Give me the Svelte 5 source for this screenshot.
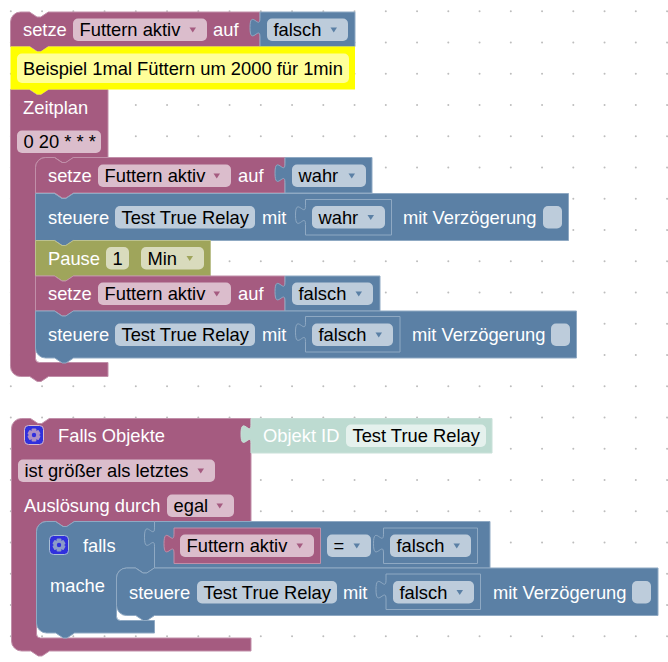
<script>
  const PURPLE = { fill: '#a55b80', line: '#c18fa9', field: '#dbbdcc', arrow: '#a55b80' };
  const BLUE = { fill: '#5b80a5', line: '#8fa9c3', field: '#bdccdb', arrow: '#5b80a5' };
  const OLIVE = { fill: '#9fa55b', line: '#bcc18f', field: '#d9dbbd', arrow: '#9fa55b' };
  const MINT = { fill: '#bddbd1', line: '#c8e0d8', field: '#e5f1ed', arrow: '#bddbd1' };

  const R = 10;
  const notchDown = 'l 7.5,5 3.75,0 7.5,-5';
  const notchUp = 'l -7.5,5 -3.75,0 -7.5,-5';
  const corner = `a ${R},${R} 0 0 1 ${R},-${R}`;
  const cornerBack = `a ${R},${R} 0 0 1 -${R},-${R}`;

  // statement block: dent on top, notch below
  function stack({ x, y, w, h, roundTop, roundBottom }) {
    const top = roundTop ? `M ${x},${y + R} ${corner}` : `M ${x},${y}`;
    const end = roundBottom ? `H ${x + R} ${cornerBack}` : `H ${x}`;
    return `${top} H ${x + 19} ${notchDown} H ${x + w} V ${y + h} H ${x + 38} ${notchUp} ${end} z`;
  }

  // block with a statement input (the C shape)
  function mouth({ x, y, w, head, inner, barTop, bottom, roundTop, barW }) {
    const top = roundTop ? `M ${x},${y + R} ${corner}` : `M ${x},${y}`;
    return `${top} H ${x + 19} ${notchDown} H ${x + w} V ${head} H ${inner + 38} ${notchUp} H ${inner + R}
      a ${R},${R} 0 0 0 -${R},${R} V ${barTop - 4} a 4,4 0 0 0 4,4 H ${x + barW} V ${bottom}
      H ${x + 38} ${notchUp} H ${x + R} ${cornerBack} z`;
  }

  // value block: puzzle tab on the left
  function value({ x, y, w, h }) {
    return `M ${x},${y} H ${x + w} V ${y + h} H ${x} V ${y + 25}
      c 0,-12.5 -10,10 -10,-9.375 s 10,3.125 10,-9.375 z`;
  }

  const shapes = [
    // first stack
    { d: stack({ x: 10.5, y: 12, w: 249.5, h: 34.5, roundTop: true }), c: PURPLE },
    { d: value({ x: 260, y: 12, w: 95, h: 34.5 }), c: BLUE },
    { d: mouth({ x: 10.5, y: 89.5, w: 97.5, head: 157.5, inner: 35.5, barTop: 362.5, bottom: 376.5, barW: 97.5 }), c: PURPLE },
    { d: stack({ x: 35.5, y: 157.5, w: 249.5, h: 35.5, roundTop: true }), c: PURPLE },
    { d: value({ x: 285, y: 157.5, w: 87, h: 35.5 }), c: BLUE },
    { d: stack({ x: 35.5, y: 193.5, w: 533, h: 47 }), c: BLUE },
    { d: value({ x: 305.5, y: 199.5, w: 86, h: 35.5 }), c: BLUE },
    { d: stack({ x: 35.5, y: 240.5, w: 175, h: 35.5 }), c: OLIVE },
    { d: stack({ x: 35.5, y: 276, w: 249.5, h: 35 }), c: PURPLE },
    { d: value({ x: 285, y: 276, w: 95, h: 35 }), c: BLUE },
    { d: stack({ x: 35.5, y: 311, w: 541, h: 47, roundBottom: true }), c: BLUE },
    { d: value({ x: 305.5, y: 316.5, w: 94.5, h: 35.5 }), c: BLUE },
    // second stack
    { d: mouth({ x: 11.5, y: 418.5, w: 239.5, head: 521.5, inner: 36.5, barTop: 638, bottom: 651, roundTop: true, barW: 239.5 }), c: PURPLE },
    { d: value({ x: 251, y: 418.5, w: 241, h: 34.5 }), c: MINT },
    { d: mouth({ x: 36.5, y: 521.5, w: 118, head: 568, inner: 116.5, barTop: 620.5, bottom: 633, roundTop: true, barW: 118 }), c: BLUE },
    { d: value({ x: 154.5, y: 521.5, w: 335.5, h: 46.5 }), c: BLUE },
    { d: value({ x: 174, y: 528, w: 146.5, h: 35.5 }), c: PURPLE },
    { d: value({ x: 383.5, y: 528, w: 94, h: 35.5 }), c: BLUE },
    { d: stack({ x: 116.5, y: 568, w: 541.5, h: 47.5, roundTop: true, roundBottom: true }), c: BLUE },
    { d: value({ x: 386, y: 574, w: 94.5, h: 35.5 }), c: BLUE }
  ];

  const labels = [
    ['setze', 23, 36], ['auf', 213, 36],
    ['Zeitplan', 23, 114],
    ['setze', 48, 182], ['auf', 238, 182],
    ['steuere', 48, 224], ['mit', 262, 224], ['mit Verzögerung', 403, 224],
    ['Pause', 48, 265],
    ['setze', 48, 300], ['auf', 238, 300],
    ['steuere', 48, 341], ['mit', 262, 341], ['mit Verzögerung', 412, 341],
    ['Falls Objekte', 58, 442],
    ['Auslösung durch', 24, 512],
    ['Objekt ID', 263, 442],
    ['falls', 83, 552],
    ['mache', 50, 592],
    ['steuere', 129, 599], ['mit', 343, 599], ['mit Verzögerung', 493, 599]
  ];

  // x, y, w, text, colours, has dropdown arrow
  const fields = [
    [73, 18.5, 134, 'Futtern aktiv', PURPLE, true],
    [267, 18.5, 81, 'falsch', BLUE, true],
    [17, 130.5, 84, '0 20 * * *', PURPLE, false],
    [98, 164.5, 133, 'Futtern aktiv', PURPLE, true],
    [292, 164.5, 74, 'wahr', BLUE, true],
    [115, 206, 140, 'Test True Relay', BLUE, false],
    [312, 206, 73, 'wahr', BLUE, true],
    [106, 247, 23, '1', OLIVE, false],
    [141, 247, 63, 'Min', OLIVE, true],
    [98, 282.5, 133, 'Futtern aktiv', PURPLE, true],
    [292, 282.5, 81, 'falsch', BLUE, true],
    [115, 323.5, 140, 'Test True Relay', BLUE, false],
    [312, 323.5, 81, 'falsch', BLUE, true],
    [18, 459.5, 197, 'ist größer als letztes', PURPLE, true],
    [167, 494.5, 67, 'egal', PURPLE, true],
    [346, 424.5, 140, 'Test True Relay', MINT, false],
    [180, 534.5, 134, 'Futtern aktiv', PURPLE, true],
    [327, 534.5, 44, '=', BLUE, true],
    [390, 534.5, 81, 'falsch', BLUE, true],
    [197, 581, 140, 'Test True Relay', BLUE, false],
    [393, 581, 81, 'falsch', BLUE, true]
  ];

  const checks = [[543, 206], [551, 323.5], [632, 581]];
  const gears = [
    { x: 24, y: 425, tint: '#ad90c4', edge: '#d9bccb' },
    { x: 49, y: 535, tint: '#8c9cc8', edge: '#a9bfd6' }
  ];

  const dots = [];
  for (let row = 0; row < 22; row++) {
    for (let col = 0; col < 22; col++) {
      dots.push([10.8 + col * 31.25, 11.3 + row * 31.25]);
    }
  }

  const teeth = [0, 60, 120];
</script>

<svg class="canvas" width="668" height="662" viewBox="0 0 668 662">
  {#each dots as [cx, cy]}
    <rect class="dot" x={cx - 1} y={cy - 1} width="2" height="2" rx="1" />
  {/each}

  {#each shapes as s}
    <path d={s.d} fill={s.c.fill} stroke={s.c.line} />
  {/each}

  <!-- comment attached to the first block -->
  <path class="comment" d="M 10.5,46.5 H 29.5 l 7.5,5 3.75,0 7.5,-5 H 355 V 89.5 H 48.5 l -7.5,5 -3.75,0 -7.5,-5 H 10.5 z" />
  <rect class="comment-field" x="17" y="53.5" width="332" height="29.5" rx="5" />
  <text class="dark" x="23" y="75">Beispiel 1mal Füttern um 2000 für 1min</text>

  {#each fields as [x, y, w, label, c, arrow]}
    <rect x={x} y={y} width={w} height="22.5" rx="5" fill={c.field} />
    <text class="dark" x={x + 6.5} y={y + 17.5}>{label}</text>
    {#if arrow}
      <polygon points="{x + w - 17.5},{y + 9} {x + w - 11},{y + 9} {x + w - 14.25},{y + 14}" fill={c.arrow} />
    {/if}
  {/each}

  {#each labels as [label, x, y]}
    <text class="light" x={x} y={y}>{label}</text>
  {/each}

  {#each checks as [x, y]}
    <rect x={x} y={y} width="19" height="22.5" rx="5" fill="#bdccdb" />
  {/each}

  {#each gears as g}
    <g transform="translate({g.x} {g.y})">
      <rect x="0.5" y="0.5" width="19" height="19" rx="4" fill="#3030dd" stroke={g.edge} />
      {#each teeth as a}
        <rect x="7.6" y="3.6" width="4.8" height="12.8" rx="1" fill={g.tint} transform="rotate({a} 10 10)" />
      {/each}
      <circle cx="10" cy="10" r="4.8" fill={g.tint} />
      <circle cx="10" cy="10" r="2.2" fill="#3030dd" />
    </g>
  {/each}
</svg>

<style>
  :global(body) {
    background: #fff;
  }

  .canvas {
    display: block;
    font-family: "Liberation Sans", Arial, sans-serif;
    font-size: 18.33px;
  }

  .dot {
    fill: #bdbdbd;
  }

  .comment {
    fill: #ffff00;
  }

  .comment-field {
    fill: #ffff99;
  }

  .dark {
    fill: #000;
  }

  .light {
    fill: #fff;
  }
</style>
